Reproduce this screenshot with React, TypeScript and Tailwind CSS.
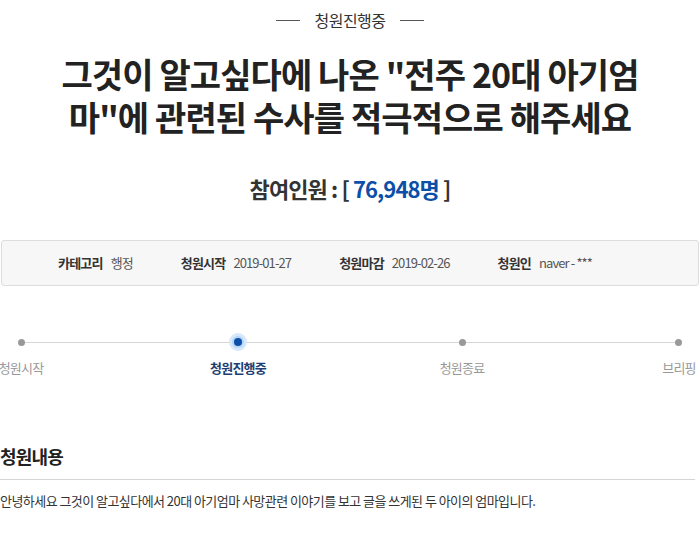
import React from 'react';

const font = { fontFamily: '"Noto Sans CJK KR", "Noto Sans", sans-serif' };

interface Step {
  label: string;
  state: 'done' | 'active' | 'todo';
}

const steps: Step[] = [
  { label: '청원시작', state: 'done' },
  { label: '청원진행중', state: 'active' },
  { label: '청원종료', state: 'todo' },
  { label: '브리핑', state: 'todo' },
];

const InfoItem: React.FC<{ label: string; value: string }> = ({ label, value }) => (
  <div className="flex items-center gap-[8px]">
    <span className="font-bold text-[#333] tracking-[-0.8px]">{label}</span>
    <span className="text-[#555] tracking-[-0.9px]">{value}</span>
  </div>
);

const StepDot: React.FC<{ step: Step }> = ({ step }) => (
  <div className="flex flex-col items-center">
    <div className="h-[20px] flex items-center justify-center">
      {step.state === 'active' ? (
        <div className="w-[18px] h-[18px] rounded-full bg-[#d6e8fb] flex items-center justify-center">
          <div className="w-[12px] h-[12px] rounded-full bg-[#b5d4f6] flex items-center justify-center">
            <div className="w-[8px] h-[8px] rounded-full bg-[#0b4fa8]" />
          </div>
        </div>
      ) : (
        <div className="w-[7px] h-[7px] rounded-full bg-[#999]" />
      )}
    </div>
    <div
      className={`mt-[6px] whitespace-nowrap text-[13px] tracking-[-0.8px] ${
        step.state === 'active' ? 'font-bold text-[#1d3f74]' : 'text-[#999]'
      }`}
    >
      {step.label}
    </div>
  </div>
);

export default function App() {
  return (
    <div className="w-[700px] h-[536px] bg-white overflow-hidden" style={font}>
      {/* status */}
      <div className="pt-[9px] flex items-center justify-center gap-[14px]">
        <div className="w-[24px] h-px bg-[#555]" />
        <span className="text-[16px] leading-[22px] text-[#333] tracking-[-0.5px]">청원진행중</span>
        <div className="w-[24px] h-px bg-[#555]" />
      </div>

      {/* title */}
      <h1 className="mt-[21px] text-center text-[34px] leading-[43px] font-bold text-[#222] tracking-[-0.9px]">
        그것이 알고싶다에 나온 "전주 20대 아기엄
        <br />
        마"에 관련된 수사를 적극적으로 해주세요
      </h1>

      {/* count */}
      <div className="mt-[35px] text-center text-[22px] leading-[30px] font-bold text-[#333] tracking-[-0.9px]">
        참여인원 : [ <span className="text-[#0b4fa8]">76,948명</span> ]
      </div>

      {/* info box */}
      <div className="mt-[37px] mx-[1px] h-[46px] rounded-[3px] border border-[#ddd] bg-[#f7f7f7] flex items-center pl-[56px] gap-[48px] text-[13px]">
        <InfoItem label="카테고리" value="행정" />
        <InfoItem label="청원시작" value="2019-01-27" />
        <InfoItem label="청원마감" value="2019-02-26" />
        <InfoItem label="청원인" value="naver - ***" />
      </div>

      {/* progress */}
      <div className="relative mt-[46px]">
        <div className="absolute left-[3%] right-[3%] top-[10px] h-px bg-[#d5d5d5]" />
        <div className="relative grid grid-cols-[6%_25%_6%_26%_6%_25%_6%]">
          <div className="flex justify-center"><StepDot step={steps[0]} /></div>
          <div />
          <div className="flex justify-center"><StepDot step={steps[1]} /></div>
          <div />
          <div className="flex justify-center"><StepDot step={steps[2]} /></div>
          <div />
          <div className="flex justify-center"><StepDot step={steps[3]} /></div>
        </div>
      </div>

      {/* content */}
      <div className="mt-[65px]">
        <h2 className="text-[18px] leading-[26px] font-bold text-[#222] tracking-[-0.8px]">청원내용</h2>
        <div className="mt-[10px] mr-[5px] h-px bg-[#d5d5d5]" />
        <p className="mt-[11px] text-[13px] leading-[20px] text-[#333] tracking-[-0.55px]">
          안녕하세요 그것이 알고싶다에서 20대 아기엄마 사망관련 이야기를 보고 글을 쓰게된 두 아이의 엄마입니다.
        </p>
      </div>
    </div>
  );
}
